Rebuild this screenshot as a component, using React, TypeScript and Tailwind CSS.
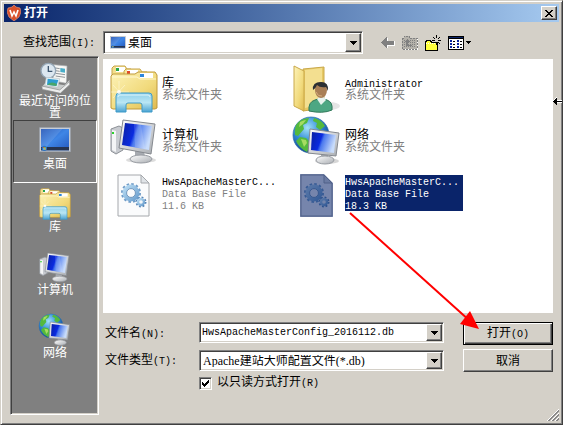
import { useState, type ReactNode } from "react";

type IconName = "library" | "user" | "computer" | "network" | "file" | "recent" | "desktop";

interface Entry {
  name: string;
  latin?: boolean;
  details: string[];
  icon: IconName;
}

const ENTRIES: Entry[] = [
  { name: "库", details: ["系统文件夹"], icon: "library" },
  { name: "Administrator", latin: true, details: ["系统文件夹"], icon: "user" },
  { name: "计算机", details: ["系统文件夹"], icon: "computer" },
  { name: "网络", details: ["系统文件夹"], icon: "network" },
  { name: "HwsApacheMasterC...", latin: true, details: ["Data Base File", "11.6 KB"], icon: "file" },
  { name: "HwsApacheMasterC...", latin: true, details: ["Data Base File", "18.3 KB"], icon: "file" },
];

const PLACES: { label: string; icon: IconName }[] = [
  { label: "最近访问的位置", icon: "recent" },
  { label: "桌面", icon: "desktop" },
  { label: "库", icon: "library" },
  { label: "计算机", icon: "computer" },
  { label: "网络", icon: "network" },
];

const SUNKEN =
  "border border-[#808080] border-r-white border-b-white shadow-[inset_1px_1px_#404040,inset_-1px_-1px_#d4d0c8] p-px";
const RAISED =
  "border border-white border-r-[#404040] border-b-[#404040] bg-[#d4d0c8] shadow-[inset_-1px_-1px_#808080]";

function Latin({ children }: { children: ReactNode }) {
  return <span className="font-['Liberation_Mono',monospace] text-[10px]">{children}</span>;
}

// 渐变定义,全页共用
function Gradients() {
  return (
    <svg className="absolute w-0 h-0" aria-hidden="true">
      <defs>
        <linearGradient id="folder" x1="0" y1="0" x2="1" y2="1">
          <stop offset="0" stopColor="#fdf3b8" />
          <stop offset="0.6" stopColor="#f1da7c" />
          <stop offset="1" stopColor="#dfb94e" />
        </linearGradient>
        <linearGradient id="glass" x1="0" y1="0" x2="0" y2="1">
          <stop offset="0" stopColor="#8fd0ea" />
          <stop offset="0.5" stopColor="#b9e6f4" />
          <stop offset="1" stopColor="#4ba3d2" />
        </linearGradient>
        <linearGradient id="screen" x1="0" y1="0" x2="1" y2="0.3">
          <stop offset="0" stopColor="#0b1fa0" />
          <stop offset="0.45" stopColor="#0a2be0" />
          <stop offset="0.55" stopColor="#4a78ee" />
          <stop offset="1" stopColor="#c8dcfb" />
        </linearGradient>
        <linearGradient id="wallpaper" x1="0" y1="0" x2="1" y2="1">
          <stop offset="0" stopColor="#1d50b4" />
          <stop offset="0.5" stopColor="#3f86e6" />
          <stop offset="1" stopColor="#2458bd" />
        </linearGradient>
        <linearGradient id="metal" x1="0" y1="0" x2="1" y2="1">
          <stop offset="0" stopColor="#ffffff" />
          <stop offset="1" stopColor="#a9adb2" />
        </linearGradient>
        <radialGradient id="globe" cx="0.4" cy="0.3" r="0.75">
          <stop offset="0" stopColor="#a4e2f8" />
          <stop offset="0.5" stopColor="#2f8ad6" />
          <stop offset="1" stopColor="#0b3684" />
        </radialGradient>
        <linearGradient id="gear" x1="0" y1="0" x2="1" y2="1">
          <stop offset="0" stopColor="#b9dcf3" />
          <stop offset="1" stopColor="#6b9fce" />
        </linearGradient>
      </defs>
    </svg>
  );
}

function LibraryArt() {
  return (
    <>
      <path d="M2 12V3l2-2h11l2 3h4v8z" fill="#f3df8e" stroke="#c7a54a" />
      <rect x="6" y="2" width="9" height="5" fill="#fff" />
      <rect x="6" y="3" width="3" height="3" fill="#27a64a" />
      <path d="M14 14V6l2-2h14l2 3h5v7z" fill="#f6e49a" stroke="#c7a54a" />
      <rect x="17" y="5" width="11" height="5" fill="#fff" />
      <rect x="17" y="6" width="3" height="3" fill="#e0492b" />
      <path d="M1 43V11l2-2h22l3-2h17l2 3v33l-2 1H3z" fill="url(#folder)" stroke="#c09a3c" />
      <rect x="30" y="8" width="13" height="5" fill="#fff" />
      <rect x="30" y="9" width="4" height="3" fill="#2d86dc" />
      <path d="M2 12h25l3 2h16" fill="none" stroke="#fff8d2" />
      <path d="M9 16v22M1 27h18M3 20l12 13M15 20L3 33" stroke="#fffbe0" strokeWidth="0.7" opacity="0.8" />
      <path d="M6 47V31q0-3 3-3h30q3 0 3 3v16H32v-7q0-2-2-2H18q-2 0-2 2v7z" fill="url(#glass)" stroke="#3f9ac8" />
      <path d="M8 32q0-2 2-2h28q2 0 2 2" fill="none" stroke="#dff6fd" />
      <circle cx="9" cy="27" r="2" fill="#fff" opacity="0.8" />
    </>
  );
}

function UserArt() {
  return (
    <>
      <ellipse cx="36" cy="41" rx="11" ry="4" fill="#999" opacity="0.25" />
      <path d="M10 4l21-2v41l-21 3z" fill="#e6c864" stroke="#c9a84a" />
      <path d="M12 5l17-2v36l-17 4z" fill="#f3df90" />
      <path d="M1 1l10 5v40L1 41z" fill="url(#folder)" stroke="#c9a84a" />
      <path d="M16 46q-1-9 6-11l6-2 6 2q6 2 5 10-9 4-23 1z" fill="#4da783" stroke="#30795a" />
      <path d="M24 34l4 6 5-5-2-3h-5z" fill="#e8f3ee" />
      <ellipse cx="28" cy="25" rx="6" ry="8" fill="#a97f56" />
      <path d="M20 25q-1-8 8-8 8 0 7 9l-2-4q-6 1-9-2-1 3-4 5z" fill="#2c2f33" />
      <path d="M23 27q2 5 6 4" fill="none" stroke="#d6ad7c" />
    </>
  );
}

function ComputerArt() {
  return (
    <>
      <ellipse cx="31" cy="43" rx="15" ry="3" fill="#777" opacity="0.25" />
      <path d="M1 12l8-3 4 2v22l-7 4-5-3z" fill="#c8cbd0" stroke="#8d9197" />
      <path d="M2 13l4 1v21l-4-2z" fill="#f4f5f6" />
      <rect x="2" y="15" width="2" height="2" fill="#2bd22b" />
      <path d="M25 34h9l1 6H25z" fill="#a7abb1" />
      <ellipse cx="31" cy="42" rx="11" ry="4" fill="url(#metal)" stroke="#989ca2" />
      <path d="M13 3l32 4-4 30-32-6z" fill="url(#metal)" stroke="#85898f" />
      <path d="M15 6l27 3-3 24-27-5z" fill="url(#screen)" />
      <path d="M24 7l7 1 4 24-10-2z" fill="#fff" opacity="0.15" />
    </>
  );
}

function NetworkArt() {
  return (
    <>
      <circle cx="18" cy="18" r="18" fill="url(#globe)" stroke="#2a6ba8" strokeWidth="0.7" />
      <path d="M3 8q5-7 13-7l-2 5-4 2 1 4-6 7-3-1q-1-5 1-10zM21 1q8 2 11 8l-5 4-4-3 1-4-4-2zM7 20l6 1 5 5-4 9q-8-4-11-11z" fill="#54b93d" />
      <path d="M7 5q4-2 6-2l-3 4-4 3zM8 22l5 1 1 3-3 4z" fill="#a6dc62" />
      <ellipse cx="34" cy="44" rx="12" ry="3" fill="#777" opacity="0.3" />
      <path d="M28 35h7v7h-7z" fill="#a7abb1" />
      <ellipse cx="32" cy="43" rx="9" ry="4" fill="url(#metal)" stroke="#989ca2" />
      <path d="M17 12l29 4-3 23-28-3z" fill="url(#metal)" stroke="#85898f" />
      <path d="M19 15l24 3-2 18-23-3z" fill="url(#screen)" />
    </>
  );
}

function FileArt({ selected }: { selected?: boolean }) {
  return (
    <>
      <path d="M8 6h23l8 8v33H8z" fill="#fafbfc" stroke="#a5a8ac" />
      <path d="M31 6v8h8z" fill="#dfe3e7" stroke="#a5a8ac" />
      <circle cx="21" cy="24" r="8.500" fill="none" stroke="#6f9cc8" strokeWidth="3" strokeDasharray="2.4 2.05" />
      <circle cx="21" cy="24" r="6.500" fill="none" stroke="url(#gear)" strokeWidth="4" />
      <circle cx="21" cy="24" r="4.400" fill="none" stroke="#4d7aa8" strokeWidth="0.7" />
      <circle cx="31" cy="33" r="4.500" fill="none" stroke="#5684b4" strokeWidth="2" strokeDasharray="1.8 1.73" />
      <circle cx="31" cy="33" r="3" fill="#f4f8fb" stroke="url(#gear)" strokeWidth="2.400" />
      {selected && <path d="M7 5h24l9 9v34H7z" fill="#0a246a" opacity="0.55" />}
    </>
  );
}

function RecentArt() {
  return (
    <>
      <path d="M22 4l20 2-1 26-20-4z" fill="#f7f7f5" stroke="#adb0b3" />
      <path d="M25 9l6 1M25 13l6 1M25 17l14 2M25 21l14 2" stroke="#8f9498" strokeWidth="1.5" />
      <path d="M32 9l7 1v6l-7-1z" fill="#48adc8" />
      <circle cx="14" cy="13" r="11" fill="#dce7f0" stroke="#93a5b4" strokeWidth="2" />
      <path d="M14 6v8h6" fill="none" stroke="#3e5770" strokeWidth="2" />
      <path d="M5 36l5-6 28 4 8-8 1 8-14 12L5 42z" fill="#c8cbcb" stroke="#777" />
      <path d="M11 23l20 2-3 13-19-3z" fill="#e9f3f7" stroke="#bdc5c9" />
      <path d="M13 25l16 2-3 9-14-2z" fill="#2e9cd0" />
      <path d="M12 34q7-6 15-1l-1 3z" fill="#49a66a" />
      <path d="M4 36l27 6 15-13v5L32 47 5 41z" fill="#eceded" stroke="#868888" />
    </>
  );
}

function DesktopArt() {
  return (
    <>
      <rect x="1" y="4" width="46" height="36" fill="#c9ced6" stroke="#9ea5b0" />
      <rect x="3" y="6" width="42" height="32" fill="url(#wallpaper)" />
      <path d="M3 6h32L11 33H3z" fill="#fff" opacity="0.12" />
      <rect x="3" y="33" width="42" height="5" fill="#26344f" />
      <circle cx="8" cy="35" r="4" fill="#2c73c0" />
      <path d="M6 33h2v2H6z" fill="#f05a28" />
      <path d="M8 33h2v2H8z" fill="#8cc63f" />
      <path d="M6 35h2v2H6z" fill="#5cc1f0" />
      <path d="M8 35h2v2H8z" fill="#ffd23c" />
    </>
  );
}

function Art({ name, className, selected }: { name: IconName; className: string; selected?: boolean }) {
  return (
    <svg viewBox="0 0 48 48" className={`${className} shrink-0 overflow-visible`} aria-hidden="true">
      {name === "library" && <LibraryArt />}
      {name === "user" && <UserArt />}
      {name === "computer" && <ComputerArt />}
      {name === "network" && <NetworkArt />}
      {name === "file" && <FileArt selected={selected} />}
      {name === "recent" && <RecentArt />}
      {name === "desktop" && <DesktopArt />}
    </svg>
  );
}

function DropArrow() {
  return (
    <svg viewBox="0 0 7 4" className="w-[7px] h-1" shapeRendering="crispEdges" aria-hidden="true">
      <path d="M0 0h7v1H0zM1 1h5v1H1zM2 2h3v1H2zM3 3h1v1H3z" fill="#000" />
    </svg>
  );
}

function TitleBar() {
  return (
    <header className="flex items-center h-[18px] pl-[3px] pr-0.5 bg-linear-to-r from-[#0a246a] to-[#a6caf0] text-white">
      <svg viewBox="0 0 14 16" className="w-3.5 h-4" aria-hidden="true">
        <path d="M7 0l2 2 4 1 1 4-2 5-5 4-5-4-2-5 1-4 4-1z" fill="#d9512c" stroke="#f0a080" strokeWidth="0.6" />
        <path d="M3 5l2 6 2-4 2 4 2-6" fill="none" stroke="#fff" strokeWidth="1.6" />
      </svg>
      <h1 className="ml-[3px] flex-1 font-bold">打开</h1>
      <button type="button" aria-label="关闭" className={`${RAISED} w-4 h-3.5 flex items-center justify-center`}>
        <svg viewBox="0 0 8 7" className="w-2 h-[7px]" shapeRendering="crispEdges" aria-hidden="true">
          <path
            d="M0 0h2v1H0zM6 0h2v1H6zM1 1h2v1H1zM5 1h2v1H5zM2 2h4v1H2zM3 3h2v1H3zM2 4h4v1H2zM1 5h2v1H1zM5 5h2v1H5zM0 6h2v1H0zM6 6h2v1H6z"
            fill="#000"
          />
        </svg>
      </button>
    </header>
  );
}

function Toolbar() {
  return (
    <div className="flex items-center ml-[18px]">
      <button type="button" aria-label="后退" className="w-5">
        <svg viewBox="0 0 14 12" className="w-3.5 h-3" shapeRendering="crispEdges" aria-hidden="true">
          <path d="M1 6l6-5v3h7v5H7v3z" fill="#fff" />
          <path d="M0 5.500l5.500-5.500v3.500h7.500v4H5.500v3.500z" fill="#808080" />
        </svg>
      </button>
      <button type="button" aria-label="向上一级" className="w-[23px]">
        <svg viewBox="0 0 17 15" className="w-[17px] h-[15px]" shapeRendering="crispEdges" aria-hidden="true">
          <path d="M16 4v10H2v1h15V4z" fill="#fff" />
          <path d="M1 3h2V1h5v2h8v11H1z" fill="#b4b1aa" stroke="#808080" strokeDasharray="2 1" />
          <path d="M3 5h12M3 7h12M3 9h12M3 11h12" stroke="#808080" strokeDasharray="1 1" />
          <path d="M3 7l3-3 3 3H7v3h4v1H5V7z" fill="#808080" />
        </svg>
      </button>
      <button type="button" aria-label="新建文件夹" className="w-6">
        <svg viewBox="0 0 17 16" className="w-[17px] h-4" shapeRendering="crispEdges" aria-hidden="true">
          <path d="M1 15V6h1V5h4v1h1v1h6v8z" fill="#ffff3c" stroke="#000" />
          <path d="M2 8h10" stroke="#fff" strokeDasharray="1 1" />
          <path d="M12 0h1v3h-1zM12 7h1v3h-1zM8 5h3v1H8zM14 5h3v1h-3zM9 2h1v1H9zM10 3h1v1h-1zM15 2h1v1h-1zM14 3h1v1h-1zM14 7h1v1h-1zM15 8h1v1h-1z" fill="#000" />
        </svg>
      </button>
      <button type="button" aria-label="查看" className="flex items-center gap-0.5">
        <svg viewBox="0 0 16 14" className="w-4 h-3.5" shapeRendering="crispEdges" aria-hidden="true">
          <path d="M0 0h16v14H0z" fill="#000" />
          <path d="M1 3h14v10H1z" fill="#fff" />
          <path d="M1 1h14v1H1z" fill="#0a246a" />
          <path d="M2 4h2v2H2zM9 4h2v2H9zM2 7h2v2H2zM9 7h2v2H9zM2 10h2v2H2zM9 10h2v2H9z" fill="#0a24a0" />
          <path d="M5 5h2v1H5zM12 5h2v1h-2zM5 8h2v1H5zM12 8h2v1h-2zM5 11h2v1H5zM12 11h2v1h-2z" fill="#000" />
        </svg>
        <svg viewBox="0 0 5 3" className="w-[5px] h-[3px]" shapeRendering="crispEdges" aria-hidden="true">
          <path d="M0 0h5v1H0zM1 1h3v1H1zM2 2h1v1H2z" fill="#000" />
        </svg>
      </button>
    </div>
  );
}

export default function App() {
  const [selected, setSelected] = useState(5);
  const [place, setPlace] = useState(1);
  const [fileName, setFileName] = useState("HwsApacheMasterConfig_2016112.db");
  const [readOnly, setReadOnly] = useState(true);

  return (
    <div className="relative overflow-hidden min-h-screen flex flex-col border border-[#d4d0c8] border-r-[#404040] border-b-[#404040] bg-[#d4d0c8] p-[3px] shadow-[inset_1px_1px_#fff,inset_-1px_-1px_#808080] font-['Liberation_Sans','Noto_Sans_CJK_SC',sans-serif] text-xs leading-3 text-black">
      <Gradients />
      <TitleBar />

      <div className="flex items-center pt-[9px] px-1.5">
        <label htmlFor="look-in" className="w-[93px] pl-[13px]">
          查找范围<Latin>(I):</Latin>
        </label>
        <div className={`${SUNKEN} relative flex w-[260px] h-[23px] bg-white`}>
          <Art name="desktop" className="absolute left-1.5 top-[3px] w-4 h-4 pointer-events-none" />
          <select id="look-in" className="appearance-none flex-1 pl-[23px] outline-none">
            <option>桌面</option>
          </select>
          <span className={`${RAISED} absolute right-px inset-y-px w-4 flex items-center justify-center pointer-events-none`}>
            <DropArrow />
          </span>
        </div>
        <Toolbar />
      </div>

      <div className="flex-1 flex gap-1 pt-0.5 px-1.5 pb-1.5">
        <nav className="w-[89px] shrink-0 border border-[#808080] border-r-white border-b-white shadow-[inset_1px_1px_#404040,inset_-1px_-1px_#d4d0c8] bg-[#808080] pl-0.5 pr-px">
          {PLACES.map((item, i) => (
            <button
              key={item.label}
              type="button"
              onClick={() => setPlace(i)}
              className={`flex flex-col items-center gap-px w-full h-[63px] pt-1 px-1 border text-white ${
                place === i ? "border-[#404040] border-r-white border-b-white" : "border-transparent"
              }`}
            >
              <Art name={item.icon} className="w-8 h-8" />
              <span>{item.label}</span>
            </button>
          ))}
        </nav>

        <main className="flex-1 min-w-0 flex flex-col pt-[3px] pb-[25px]">
          <ul className="flex-1 grid grid-cols-[183px_183px] auto-rows-[52px] content-start bg-white pt-1.5 pl-[7px]">
            {ENTRIES.map((entry, i) => (
              <li key={i}>
                <button type="button" onClick={() => setSelected(i)} className="flex items-center gap-1 h-12 text-left">
                  <Art name={entry.icon} className="w-12 h-12" selected={selected === i} />
                  <span
                    className={`flex flex-col w-[118px] whitespace-nowrap ${
                      selected === i ? "bg-[#0a246a] text-white" : ""
                    }`}
                  >
                    <span className="h-3">{entry.latin ? <Latin>{entry.name}</Latin> : entry.name}</span>
                    {entry.details.map((line) => (
                      <span key={line} className={`h-3 ${selected === i ? "" : "text-[#808080]"}`}>
                        {entry.icon === "file" ? <Latin>{line}</Latin> : line}
                      </span>
                    ))}
                  </span>
                </button>
              </li>
            ))}
          </ul>

          <form className="flex gap-[19px] pt-[9px]" onSubmit={(e) => e.preventDefault()}>
            <div className="flex-1 min-w-0 flex flex-col">
              <div className="flex items-center">
                <label htmlFor="file-name" className="w-24 pl-0.5 pt-0.5 shrink-0">
                  文件名<Latin>(N):</Latin>
                </label>
                <div className={`${SUNKEN} flex flex-1 min-w-0 h-[21px] bg-white`}>
                  <input
                    id="file-name"
                    value={fileName}
                    onChange={(e) => setFileName(e.target.value)}
                    className="flex-1 min-w-0 pl-px outline-none font-['Liberation_Mono',monospace] text-[10px]"
                  />
                  <button type="button" aria-label="历史文件名" className={`${RAISED} w-4 flex items-center justify-center`}>
                    <DropArrow />
                  </button>
                </div>
              </div>
              <div className="flex items-center mt-[7px]">
                <label htmlFor="file-type" className="w-24 pl-0.5 shrink-0">
                  文件类型<Latin>(T):</Latin>
                </label>
                <div className={`${SUNKEN} relative flex flex-1 min-w-0 h-[21px] bg-white`}>
                  <select
                    id="file-type"
                    className="appearance-none flex-1 min-w-0 pl-0.5 outline-none font-['Liberation_Serif','Noto_Sans_CJK_SC',serif]"
                  >
                    <option>Apache建站大师配置文件(*.db)</option>
                  </select>
                  <span className={`${RAISED} absolute right-px inset-y-px w-4 flex items-center justify-center pointer-events-none`}>
                    <DropArrow />
                  </span>
                </div>
              </div>
              <label className="flex items-center gap-[5px] mt-[5px] ml-24">
                <span className={`${SUNKEN} relative w-[13px] h-[13px] bg-white`}>
                  <input
                    type="checkbox"
                    checked={readOnly}
                    onChange={(e) => setReadOnly(e.target.checked)}
                    className="peer appearance-none absolute inset-0"
                  />
                  <svg viewBox="0 0 9 9" className="hidden peer-checked:block w-[9px] h-[9px] pointer-events-none" shapeRendering="crispEdges" aria-hidden="true">
                    <path d="M1 3h1v3H1zM2 4h1v3H2zM3 5h1v3H3zM4 4h1v3H4zM5 3h1v3H5zM6 2h1v3H6zM7 1h1v3H7z" fill="#000" />
                  </svg>
                </span>
                <span>
                  以只读方式打开<Latin>(R)</Latin>
                </span>
              </label>
            </div>
            <div className="flex flex-col gap-1 w-[90px]">
              <button type="submit" className="h-[23px] border border-black bg-[#d4d0c8] shadow-[inset_1px_1px_#fff,inset_-1px_-1px_#404040,inset_-2px_-2px_#808080]">
                打开<Latin>(O)</Latin>
              </button>
              <button type="button" className={`${RAISED} h-[23px]`}>
                取消
              </button>
            </div>
          </form>
        </main>
      </div>

      {/* 右下角缩放手柄 */}
      <svg viewBox="0 0 12 12" className="absolute right-[3px] bottom-[3px] w-3 h-3" aria-hidden="true">
        <path d="M0 12L12 0M4 12l8-8M8 12l4-4" stroke="#fff" />
        <path d="M1 12L12 1M2 12L12 2M5 12l7-7M6 12l6-6M9 12l3-3M10 12l2-2" stroke="#808080" strokeWidth="0.9" />
      </svg>

      {/* 指向"打开"按钮的红色箭头 */}
      <svg viewBox="0 0 132 120" className="absolute left-[348px] top-[211px] w-[132px] h-[120px] pointer-events-none" aria-hidden="true">
        <path d="M1 1l120 108" stroke="#f00" strokeWidth="2" />
        <path d="M130 117l-19-5 10-13z" fill="#f00" />
      </svg>

      {/* 鼠标指针 */}
      <svg viewBox="0 0 10 9" className="absolute right-0 top-24 w-2.5 h-[9px] pointer-events-none" shapeRendering="crispEdges" aria-hidden="true">
        <path d="M0 4l5-4v3h5v3H5v3z" fill="#fff" />
        <path d="M1 4h9v1H1zM2 3h3v3H2zM3 2h2v5H3zM4 1h1v7H4z" fill="#000" />
      </svg>
    </div>
  );
}
